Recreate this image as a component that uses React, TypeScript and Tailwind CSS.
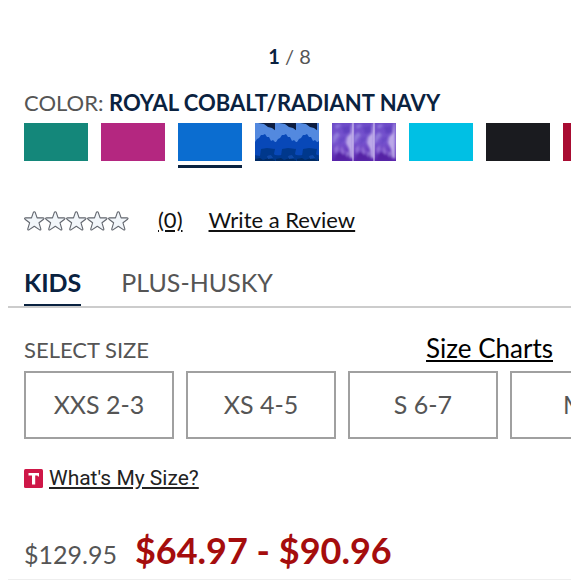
import { useState } from 'react'

interface Swatch {
  name: string
  color: string
  pattern?: 'camo' | 'tiedye'
}

const SWATCHES: Swatch[] = [
  { name: 'Emerald', color: 'bg-[#14877a]' },
  { name: 'Berry', color: 'bg-[#b42780]' },
  { name: 'Royal Cobalt/Radiant Navy', color: 'bg-[#0b6dd0]' },
  { name: 'Blue Camo', color: 'bg-[#0848b8]', pattern: 'camo' },
  { name: 'Purple Tie Dye', color: 'bg-[#7a50cc]', pattern: 'tiedye' },
  { name: 'Aqua', color: 'bg-[#00c0e4]' },
  { name: 'Black', color: 'bg-[#1a1b1f]' },
  { name: 'Red', color: 'bg-[#a80c32]' },
]

const SIZES = ['XXS 2-3', 'XS 4-5', 'S 6-7', 'M 8']

const TILES = [0, 21, 42]

function CamoPattern() {
  return (
    <svg viewBox="0 0 64 38" preserveAspectRatio="none" className="block h-full w-full" aria-hidden="true">
      <defs>
        <filter id="weave">
          <feGaussianBlur stdDeviation=".4" />
        </filter>
      </defs>
      <rect width="64" height="38" fill="#0848b8" />
      <g filter="url(#weave)">
        {[0, 21, 42, 63].map((x) => (
          <g key={x} transform={`translate(${x} 0)`}>
            <path d="M-1 -2H22V17L20 19L18 17L16 18L14 14L12 14L10 11L8 12L6 12L4 15L2 16L0 19H-1Z" fill="#5289df" />
            <path d="M3 -2H21V8L17 5L13 4L9 1L3 0Z" fill="#071c40" />
            <path d="M6 26L12 25L20 26L19 31L21 33L27 32V40H-1V32L5 33Z" fill="#06378c" />
            <path d="M0 36L5 35L8 37L14 35L20 37V40H0Z" fill="#062a63" />
            <path d="M12 33L16 32L18 35L13 36Z" fill="#0b4aa8" />
          </g>
        ))}
      </g>
    </svg>
  )
}

function TieDyePattern() {
  return (
    <svg viewBox="0 0 64 38" preserveAspectRatio="none" className="block h-full w-full" aria-hidden="true">
      <defs>
        <linearGradient id="dye" x1="0" y1="0" x2="0" y2="1">
          <stop offset="0" stopColor="#6d4bc8" />
          <stop offset=".5" stopColor="#7855cf" />
          <stop offset="1" stopColor="#5a24ac" />
        </linearGradient>
        <filter id="soak">
          <feGaussianBlur stdDeviation="1" />
        </filter>
      </defs>
      <rect width="64" height="38" fill="url(#dye)" />
      {TILES.map((x) => (
        <g key={x} transform={`translate(${x} 0)`}>
          <g filter="url(#soak)">
            <path d="M20 0L19 10L15 14L14 20L17 26L18 34L21 36V0Z" fill="#bba8e8" />
            <path d="M1 13L5 9L8 12L4 17L1 21Z" fill="#917ada" />
            <path d="M3 2L9 1L8 4L4 6Z" fill="#8c74da" />
            <path d="M10 4L17 3L18 9L12 11Z" fill="#6040bf" />
            <path d="M8 15L14 13L11 19L6 22Z" fill="#6a48c6" />
            <path d="M2 25L6 22L7 27L3 31Z" fill="#8f6cd6" />
            <path d="M8 26L10 23L13 29L10 34Z" fill="#8d68d2" />
            <path d="M4 32L8 29L13 33L17 31V38H3Z" fill="#5520a4" />
            <path d="M14 28L17 30L15 35Z" fill="#9c80da" />
          </g>
          {x > 0 && <path d="M0 0V38" stroke="#d5c8f0" />}
        </g>
      ))}
    </svg>
  )
}

function Star() {
  return (
    <svg viewBox="0 0 21 20" className="h-5 w-[21px]" aria-hidden="true">
      <path
        d="M10.3 .8Q11 .8 11.4 1.8L13.1 6.9H18.9Q20.7 7.1 19.6 8.2L15 11.8L16.8 17.8Q17 19.5 15.7 18.9L10.3 15.3L4.9 18.9Q3.6 19.5 3.8 17.8L5.6 11.8L1 8.2Q-.1 7.1 1.7 6.9H7.5L9.2 1.8Q9.6 .8 10.3 .8Z"
        fill="#f2f6fa"
        stroke="#62666e"
        strokeWidth="1.1"
        strokeLinejoin="round"
      />
    </svg>
  )
}

function ColorPicker() {
  const [selected, setSelected] = useState(2)

  return (
    <div className="flex gap-[13px] overflow-hidden pl-4">
      {SWATCHES.map((swatch, i) => (
        <button
          key={swatch.name}
          type="button"
          aria-label={swatch.name}
          aria-pressed={selected === i}
          onClick={() => setSelected(i)}
          className={`w-16 shrink-0 border-b-[3px] pb-1 ${selected === i ? 'border-[#0a2240]' : 'border-transparent'}`}
        >
          <span className={`block h-[38px] ${swatch.color}`}>
            {swatch.pattern === 'camo' && <CamoPattern />}
            {swatch.pattern === 'tiedye' && <TieDyePattern />}
          </span>
        </button>
      ))}
    </div>
  )
}

export default function App() {
  const [tab, setTab] = useState('KIDS')
  const [size, setSize] = useState('')

  return (
    <main className="bg-white px-2 pt-10 font-['Lato',sans-serif] text-[#555]">
      {/* Gallery position */}
      <p className="text-center text-xl leading-8">
        <span className="font-bold text-[#0a2240]">1</span> / 8
      </p>

      <p className="mt-[15px] px-4 text-[22px] leading-8">
        COLOR: <span className="font-bold text-[#0a2240]">ROYAL COBALT/RADIANT NAVY</span>
      </p>
      <div className="mt-1">
        <ColorPicker />
      </div>

      {/* Reviews */}
      <div className="mt-9 flex items-center px-4 text-[22px] leading-8 text-[#111]">
        <span className="flex pt-[2px]" role="img" aria-label="0 out of 5 stars">
          {[1, 2, 3, 4, 5].map((n) => (
            <Star key={n} />
          ))}
        </span>
        <a href="#reviews" className="ml-[29px] underline underline-offset-2">(0)</a>
        <a href="#write-review" className="ml-[26px] underline underline-offset-2">Write a Review</a>
      </div>

      {/* Size range tabs */}
      <div className="mt-7 flex gap-10 border-b-2 border-[#ccc] px-4" role="tablist">
        {['KIDS', 'PLUS-HUSKY'].map((name) => (
          <button
            key={name}
            type="button"
            role="tab"
            aria-selected={tab === name}
            onClick={() => setTab(name)}
            className={`border-b-2 pb-1 text-[25px] leading-9 ${
              tab === name ? 'border-[#0a2240] font-bold text-[#0a2240]' : 'border-transparent'
            }`}
          >
            {name}
          </button>
        ))}
      </div>

      <div className="mt-6 flex items-center justify-between pr-[18px] pl-4">
        <h2 className="text-[22px] leading-9">SELECT SIZE</h2>
        <a href="#size-charts" className="pb-1 text-[26px] leading-8 text-black underline underline-offset-2">
          Size Charts
        </a>
      </div>
      <div className="mt-[3px] flex gap-3 overflow-hidden pl-4">
        {SIZES.map((label) => (
          <button
            key={label}
            type="button"
            aria-pressed={size === label}
            onClick={() => setSize(label)}
            className="h-[68px] w-[150px] shrink-0 border-2 border-[#a0a0a0] text-[25px]"
          >
            {label}
          </button>
        ))}
      </div>

      <a
        href="#whats-my-size"
        className="mt-[23px] ml-4 inline-flex items-center gap-[6px] font-['Roboto',sans-serif] text-[21px] leading-8 text-[#222]"
      >
        <svg viewBox="0 0 19 19" className="size-[19px]" aria-hidden="true">
          <rect width="19" height="19" rx="1.5" fill="#ce1747" />
          <path d="M4.5 4H15V7.4H14L13.4 6.6H11.2V15.5H8V6.6H4.5Z" fill="#fff" />
        </svg>
        <span className="underline underline-offset-2">What's My Size?</span>
      </a>

      {/* Price */}
      <p className="mt-[30px] flex items-baseline gap-[18px] px-4">
        <del className="text-[25px] no-underline">$129.95</del>
        <ins className="text-4xl leading-[52px] font-bold text-[#a50d0d] no-underline">$64.97 - $90.96</ins>
      </p>
      <hr className="mt-[3px] border-[#eee]" />
    </main>
  )
}
